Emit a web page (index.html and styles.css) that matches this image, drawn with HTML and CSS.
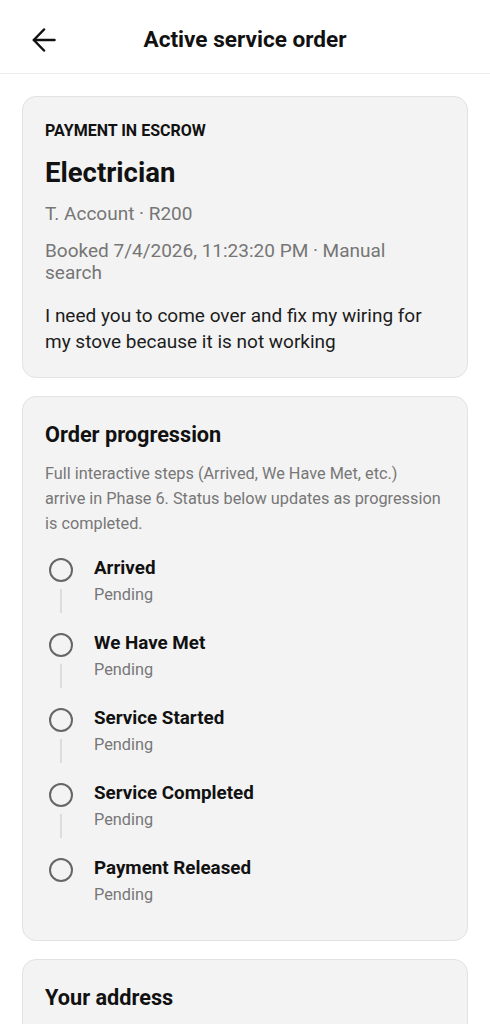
FILE: index.html
```html
<!DOCTYPE html>
<html lang="en">
<head>
  <meta charset="UTF-8">
  <title>Active service order</title>
  <link rel="stylesheet" href="styles.css">
</head>
<body>
  <header class="topbar">
    <button class="back-btn" aria-label="Back">
      <svg width="24" height="24" viewBox="0 0 24 24" fill="none" stroke="#111" stroke-width="2.5" stroke-linecap="round" stroke-linejoin="round">
        <path d="M22.5 12H2"/>
        <path d="M12 1.5L1.8 12 12 22.5"/>
      </svg>
    </button>
    <h1>Active service order</h1>
  </header>

  <main class="content">
    <section class="card">
      <p class="eyebrow">PAYMENT IN ESCROW</p>
      <h2 class="service">Electrician</h2>
      <p class="meta">T. Account · R200</p>
      <p class="meta booked">Booked 7/4/2026, 11:23:20 PM · Manual search</p>
      <p class="desc">I need you to come over and fix my wiring for my stove because it is not working</p>
    </section>

    <section class="card">
      <h3 class="card-title">Order progression</h3>
      <p class="note">Full interactive steps (Arrived, We Have Met, etc.)<br>arrive in Phase 6. Status below updates as progression is completed.</p>
      <ol class="steps">
        <li class="step">
          <div class="rail"><span class="dot"></span><span class="line"></span></div>
          <div class="step-text"><strong>Arrived</strong><span>Pending</span></div>
        </li>
        <li class="step">
          <div class="rail"><span class="dot"></span><span class="line"></span></div>
          <div class="step-text"><strong>We Have Met</strong><span>Pending</span></div>
        </li>
        <li class="step">
          <div class="rail"><span class="dot"></span><span class="line"></span></div>
          <div class="step-text"><strong>Service Started</strong><span>Pending</span></div>
        </li>
        <li class="step">
          <div class="rail"><span class="dot"></span><span class="line"></span></div>
          <div class="step-text"><strong>Service Completed</strong><span>Pending</span></div>
        </li>
        <li class="step">
          <div class="rail"><span class="dot"></span></div>
          <div class="step-text"><strong>Payment Released</strong><span>Pending</span></div>
        </li>
      </ol>
    </section>

    <section class="card address">
      <h3 class="card-title">Your address</h3>
    </section>
  </main>
</body>
</html>
```

FILE: styles.css
```css
body {
  margin: 0;
  font-family: Roboto, "Noto Sans", Arial, sans-serif;
  background-color: #ffffff;
  color: #111;
}
.topbar {
  height: 74px;
  display: flex;
  align-items: center;
  justify-content: center;
  position: relative;
  border-bottom: 1px solid #ececec;
  box-sizing: border-box;
  padding-top: 6px;
}
.topbar h1 {
  margin: 0;
  font-size: 22.6px;
  font-weight: 700;
  color: #111;
}
.back-btn {
  position: absolute;
  left: 32px;
  top: 28px;
  padding: 0;
  border: none;
  background: none;
  display: flex;
}
.content {
  padding: 22px 22px;
  display: flex;
  flex-direction: column;
  gap: 18px;
}
.card {
  background-color: #f3f3f3;
  border: 1px solid #e2e2e2;
  border-radius: 14px;
  padding: 24px 22px 22px;
}
.card p {
  margin: 0;
}
.eyebrow {
  font-size: 16px;
  line-height: 20px;
  font-weight: 700;
  color: #111;
}
.service {
  margin: 16px 0 13px;
  font-size: 27.5px;
  line-height: 32px;
  font-weight: 700;
}
.card .meta {
  font-size: 19px;
  line-height: 24px;
  color: #767676;
}
.card .booked {
  margin-top: 14px;
  line-height: 22px;
}
.card .desc {
  margin-top: 19px;
  font-size: 19px;
  line-height: 26px;
  color: #1c1c1c;
}
.card-title {
  margin: 0;
  font-size: 21.7px;
  line-height: 28px;
  font-weight: 700;
}
.card .note {
  margin-top: 12px;
  font-size: 16.3px;
  line-height: 25px;
  color: #777;
}
.steps {
  list-style: none;
  margin: 20px 0 12px;
  padding: 0;
  display: flex;
  flex-direction: column;
  gap: 25px;
}
.step {
  display: flex;
  gap: 17px;
}
.rail {
  width: 32px;
  height: 50px;
  display: flex;
  flex-direction: column;
  align-items: center;
}
.dot {
  flex: none;
  width: 20px;
  height: 20px;
  border: 2px solid #666;
  border-radius: 50%;
  margin-top: 2px;
}
.line {
  flex: none;
  width: 2px;
  height: 24px;
  margin-top: 7px;
  background-color: #dcdcdc;
}
.step-text {
  display: flex;
  flex-direction: column;
  gap: 4px;
}
.step-text strong {
  font-size: 18.8px;
  font-weight: 700;
  line-height: 24px;
}
.step-text span {
  font-size: 16.3px;
  line-height: 22px;
  color: #777;
}
.address {
  min-height: 120px;
}
```
